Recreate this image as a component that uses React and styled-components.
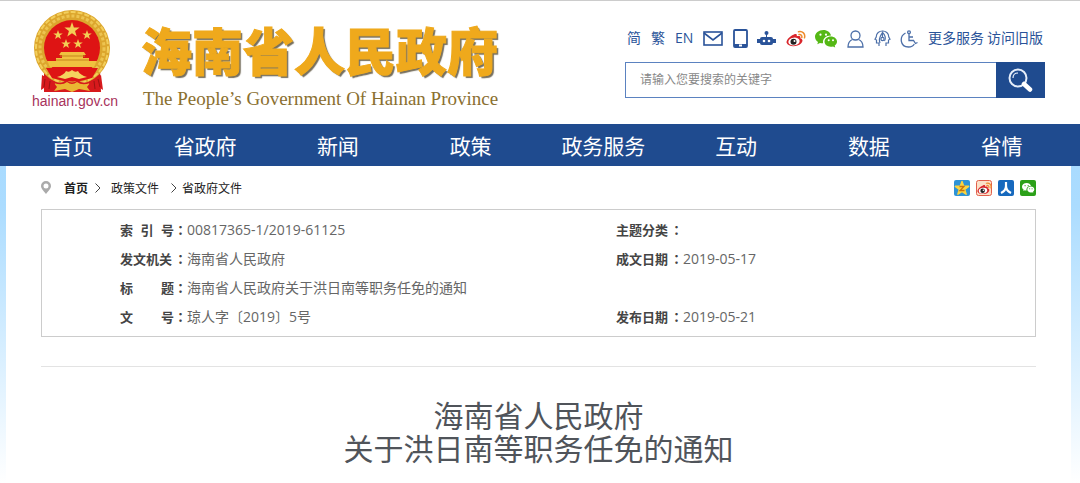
import React from "react";
import styled, { createGlobalStyle } from "styled-components";

const NAVY = "#1f4b8f";

const GlobalStyle = createGlobalStyle`
  * { box-sizing: border-box; }
  body {
    margin: 0;
    background: #fff;
    color: #333;
    font-family: "Open Sans", "Noto Sans CJK SC", sans-serif;
    font-size: 12px;
  }
  a { color: inherit; text-decoration: none; }
  svg { display: block; }
`;

const Page = styled.div`
  border-top: 1px solid #ccc;
`;

const Header = styled.header`
  display: flex;
  justify-content: space-between;
  align-items: flex-start;
  height: 123px;
  padding: 8px 35px 0 32px;
`;

const Brand = styled.a`
  display: flex;
  gap: 24px;
`;

const EmblemBlock = styled.span`
  display: flex;
  flex-direction: column;
  align-items: flex-start;
  width: 85px;
`;

const Domain = styled.span`
  color: #a8325c;
  font: 14px/16px "Liberation Sans", sans-serif;
`;

const BrandText = styled.span`
  display: flex;
  flex-direction: column;
  padding-top: 13px;
`;

const BrandName = styled.span`
  color: #efa91c;
  font-size: 51px;
  font-weight: 900;
  line-height: 58px;
  white-space: nowrap;
  -webkit-text-stroke: 1px #efa91c;
  text-shadow: 2px 2px 1px #77705f;
`;

const BrandEnglish = styled.span`
  color: #8a6f30;
  font: 19px/20px "Liberation Serif", serif;
  padding: 9px 0 0 2px;
  white-space: nowrap;
`;

const Tools = styled.div`
  display: flex;
  flex-direction: column;
  gap: 13px;
  width: 420px;
  padding-top: 19px;
`;

const ToolLinks = styled.nav`
  display: flex;
  align-items: center;
  justify-content: space-between;
  height: 21px;
  padding: 0 2px;
  color: #2a5399;
  font-size: 14px;
  line-height: 20px;
`;

const TextLinks = styled.span`
  display: flex;
  gap: ${(p) => p.$gap}px;
  padding-bottom: 2px;
`;

const Search = styled.form`
  display: flex;
  height: 36px;
`;

const SearchInput = styled.input`
  flex: 1;
  min-width: 0;
  padding: 0 14px 2px;
  border: 1px solid #5b82c0;
  border-right: 0;
  border-radius: 0;
  outline: 0;
  font: 12px "Open Sans", "Noto Sans CJK SC", sans-serif;
  &::placeholder { color: #888; }
`;

const SearchButton = styled.button`
  display: flex;
  align-items: center;
  justify-content: center;
  width: 49px;
  padding: 0;
  border: 0;
  background: ${NAVY};
`;

const MainNav = styled.nav`
  display: grid;
  grid-template-columns: repeat(8, 1fr);
  height: 42px;
  padding: 0 12px 0 6px;
  background: ${NAVY};
`;

const NavLink = styled.a`
  color: #fff;
  font-size: 21px;
  line-height: 44px;
  text-align: center;
`;

const Backdrop = styled.div`
  padding: 0 9px 0 6px;
  background: linear-gradient(#a9dbff 0, #abdcff 40px, #fff 317px);
`;

const Content = styled.main`
  min-height: 317px;
  padding: 0 35px;
  background: #fff;
`;

const TopLine = styled.div`
  display: flex;
  align-items: center;
  justify-content: space-between;
  height: 43px;
`;

const Crumbs = styled.nav`
  display: flex;
  align-items: center;
  color: #222;
`;

const Crumb = styled.a`
  margin-right: ${(p) => p.$after || 0}px;
  font-weight: ${(p) => (p.$strong ? 700 : 400)};
`;

const CrumbIcon = styled.span`
  margin-right: ${(p) => p.$after}px;
`;

const Share = styled.div`
  display: flex;
  gap: 6px;
`;

const InfoTable = styled.table`
  width: 100%;
  table-layout: fixed;
  border: 1px solid #ccc;
  border-collapse: separate;
  border-spacing: 0;
  padding: 5px 0;
  line-height: 28px;
`;

const LabelCell = styled.th`
  height: 29px;
  padding: 0;
  font-size: 13px;
  vertical-align: middle;
`;

const LabelLine = styled.span`
  display: flex;
  justify-content: flex-end;
  color: #444;
  font-weight: 700;
`;

const Label = styled.span`
  display: flex;
  justify-content: space-between;
  width: 54px;
  white-space: nowrap;
`;

const Colon = styled.span`
  font-family: "Noto Sans CJK TC", sans-serif;
`;

const Value = styled.td`
  height: 29px;
  padding: 0;
  color: #666;
  font-size: 14px;
  white-space: nowrap;
`;

const Divider = styled.hr`
  height: 1px;
  margin: 29px 0 31px;
  border: 0;
  background: #e3e3e3;
`;

const DocTitle = styled.h1`
  margin: 0;
  color: #50545a;
  font: 400 30px/33px "Noto Sans CJK SC", sans-serif;
  text-align: center;
`;

const star = (cx, cy, r) =>
  Array.from({ length: 10 }, (_, i) => {
    const a = (Math.PI * i) / 5 - Math.PI / 2;
    const q = i % 2 ? r * 0.4 : r;
    return `${cx + q * Math.cos(a)},${cy + q * Math.sin(a)}`;
  }).join(" ");

const Emblem = () => (
  <svg width="80" height="84" viewBox="0 0 80 84" aria-hidden="true">
    <path d="M12 60H68L69 83H12Z" fill="#d7191c" />
    <circle cx="40" cy="39" r="38" fill="#dca62d" />
    <circle cx="40" cy="39" r="36" fill="none" stroke="#f3cf5c" strokeWidth="2" strokeDasharray="5 2" />
    <circle cx="40" cy="39" r="32" fill="none" stroke="#edc450" strokeWidth="3" strokeDasharray="3 2" />
    <circle cx="40" cy="39" r="28" fill="#de1414" />
    <polygon points={star(40, 21, 8)} fill="#f3cf55" />
    <polygon points={star(26, 26, 5)} fill="#f3cf55" />
    <polygon points={star(55, 26, 5)} fill="#f3cf55" />
    <polygon points={star(34, 35, 5)} fill="#f3cf55" />
    <polygon points={star(46, 35, 5)} fill="#f3cf55" />
    <path d="M29 43H52L54 46H51V49H57V52H65L62 58H18L15 52H24V49H30V46H27Z" fill="#f0c13f" />
    <path d="M28 47H53M24 51H57" stroke="#c5851c" />
    <path d="M14 59H66L60 69Q40 76 20 69Z" fill="#de1414" />
    <path d="M25 68Q32 66 34 62Q37 64 40 61Q43 64 46 62Q48 66 55 68L47 70L40 68L33 70Z" fill="#f5d45e" />
    <path d="M20 72Q30 76 34 71Q40 76 46 71Q50 76 60 72V83H20Z" fill="#d7191c" />
    <path d="M22 74Q30 77 35 73Q40 77 45 73Q50 77 58 74L55 78L58 82L47 80L40 83L33 80L22 82L25 78Z" fill="#eab632" />
    <path d="M10 66Q17 70 23 73L22 82L18 80L15 83L12 79L9 81Z" fill="#d7191c" />
    <path d="M69 66Q63 70 57 73L58 82L62 80L65 83L68 79L71 81Z" fill="#d7191c" />
    <path d="M13 70L12 78M18 72L17 80M66 70L68 78M62 72L63 80" stroke="#9c1212" />
  </svg>
);

const MailIcon = () => (
  <svg width="20" height="15" viewBox="0 0 20 15" fill="none" stroke="#2a5399" strokeWidth="1.6">
    <rect x="1" y="1" width="18" height="13" />
    <path d="M1 2L10 9L19 2" />
  </svg>
);

const TabletIcon = () => (
  <svg width="15" height="19" viewBox="0 0 15 19">
    <rect x="1" y="1" width="13" height="17" rx="1" fill="none" stroke="#2a5399" strokeWidth="1.8" />
    <path d="M1 15H14V18H1Z" fill="#2a5399" />
    <rect x="6" y="15.500" width="3" height="2" fill="#fff" />
  </svg>
);

const RobotIcon = () => (
  <svg width="19" height="15" viewBox="0 0 19 15" fill="#2a5399">
    <circle cx="9.500" cy="2" r="2" />
    <path d="M9 2H10V6H9ZM0 8H3V12H0ZM16 8H19V12H16Z" />
    <rect x="3" y="6" width="13" height="8" rx="2" />
    <circle cx="7" cy="10" r="1.300" fill="#fff" />
    <circle cx="12" cy="10" r="1.300" fill="#fff" />
  </svg>
);

const WeiboShape = () => (
  <>
    <path d="M8 4.500C10 3.400 11.300 4.300 10.700 6.300C13 5.400 15 6 14.300 8.200C17 9 17.200 11.300 15 13.500C11 17.300 2 17 .6 12.800C0 10 4.500 5.500 8 4.500Z" fill="#d9252a" />
    <ellipse cx="8" cy="11.500" rx="5.700" ry="3.900" transform="rotate(-8 8 11.500)" fill="#fff" />
    <circle cx="7.500" cy="11.800" r="3" fill="#222" />
    <circle cx="8.500" cy="10.900" r="1" fill="#fff" />
    <path d="M13 4.600C15 4.200 16.300 5.600 15.800 7.600M12.500 1.700C16.500.7 19.600 3.800 18.500 7.800" fill="none" stroke="#ee8b2c" strokeWidth="1.500" strokeLinecap="round" />
  </>
);

const WeiboIcon = () => (
  <svg width="20" height="17" viewBox="0 0 20 17"><WeiboShape /></svg>
);

const WechatShape = ({ fill, eye }) => (
  <>
    <path d="M8.500 0C3.700 0 0 3 0 6.800C0 9 1.200 10.700 3 12L2.300 14.200L5 12.900C6 13.200 7 13.400 8.100 13.300C7.200 9 10.800 5.500 16 5.500C15.200 2.300 12.200 0 8.500 0Z" fill={fill} />
    <path d="M22 11.500C22 8.600 19.200 6.400 15.800 6.400C12.300 6.400 9.500 8.700 9.500 11.600C9.500 14.500 12.200 16.800 15.700 16.800C16.500 16.800 17.300 16.700 18 16.400L20.200 17.600L19.700 15.600C21.200 14.600 22 13.200 22 11.500Z" fill={fill} />
    <circle cx="5.500" cy="4.700" r="1.100" fill={eye} />
    <circle cx="11" cy="4.700" r="1.100" fill={eye} />
    <circle cx="13.700" cy="10.200" r="1" fill={eye} />
    <circle cx="18" cy="10.200" r="1" fill={eye} />
  </>
);

const WechatIcon = () => (
  <svg width="22" height="18" viewBox="0 0 22 18"><WechatShape fill="#55b815" eye="#fff" /></svg>
);

const PersonIcon = () => (
  <svg width="17" height="18" viewBox="0 0 17 18" fill="none" stroke="#4c6fa8" strokeWidth="1.300">
    <circle cx="8.500" cy="5.500" r="4.500" />
    <path d="M5.500 9.500C2.500 10.700 1 13 1 17H16C16 13 14.500 10.700 11.500 9.500" />
  </svg>
);

const HeadsIcon = () => (
  <svg width="17" height="17" viewBox="0 0 17 17" fill="none" stroke="#4c6fa8" strokeWidth="1.200">
    <path d="M5 16V13H2.500V10L1 9.200L2.200 7C2.200-1 14.800-1 14.800 7L16 9.200L14.500 10V13H12V16" />
    <path d="M6 13C4 8 6.500 6 8.500 2.500V7.500M8.500 2.500C11.500 5 12 9 10.500 11" />
    <circle cx="8.500" cy="9" r="1.600" />
  </svg>
);

const WheelchairIcon = () => (
  <svg width="18" height="18" viewBox="0 0 18 18" fill="none" stroke="#4c6fa8" strokeWidth="1.300">
    <path d="M5.500 3C-1 6.500 0 17 8.500 17C11.200 17 13.300 15.800 14.300 14" />
    <circle cx="9" cy="2.200" r="1.400" />
    <path d="M9 4V10.500H13.500L15.500 13.500L17.500 12.500M9 7H13" />
  </svg>
);

const SearchIcon = () => (
  <svg width="25" height="25" viewBox="0 0 25 25" fill="none" stroke="#e6eefa">
    <circle cx="10" cy="10" r="8.500" strokeWidth="2" />
    <path d="M5 10C5 7 7 5 10 5" strokeWidth="1.200" />
    <path d="M16 16L22 21.500" strokeWidth="4.500" strokeLinecap="round" stroke="#fff" />
  </svg>
);

const PinIcon = () => (
  <svg width="10" height="13" viewBox="0 0 10 13">
    <path fillRule="evenodd" d="M5 0A5 5 0 0 0 0 5C0 8 3 10 5 13C7 10 10 8 10 5A5 5 0 0 0 5 0ZM5 2.500A2.500 2.500 0 1 1 5 7.500A2.500 2.500 0 0 1 5 2.500Z" fill="#aaa" />
  </svg>
);

const Arrow = () => (
  <svg width="6" height="10" viewBox="0 0 6 10" fill="none" stroke="#444"><path d="M.5 .5L5 5L.5 9.500" /></svg>
);

const QzoneShare = () => (
  <svg width="16" height="16" viewBox="0 0 16 16">
    <rect width="16" height="16" rx="2" fill="#2e93d6" />
    <polygon points={star(8, 8.5, 7)} fill="#fcd53f" stroke="#fcd53f" strokeWidth="1.500" strokeLinejoin="round" />
    <path d="M5.500 6.500H10L6 10.500H10.500" fill="none" stroke="#c9730b" strokeWidth="1.300" />
  </svg>
);

const WeiboShare = () => (
  <svg width="16" height="16" viewBox="0 0 16 16">
    <rect x=".5" y=".5" width="15" height="15" rx="2" fill="#fbe0c8" stroke="#e2604c" />
    <g transform="translate(1 2) scale(.75)"><WeiboShape /></g>
  </svg>
);

const RenrenShare = () => (
  <svg width="16" height="16" viewBox="0 0 16 16">
    <rect width="16" height="16" rx="2" fill="#1769bd" />
    <path d="M8 2V6C8 9 6 11.500 3 13M8 6C8 9 10 11.500 13 13" fill="none" stroke="#fff" strokeWidth="2.200" />
  </svg>
);

const WechatShare = () => (
  <svg width="16" height="16" viewBox="0 0 16 16">
    <rect width="16" height="16" rx="2" fill="#2ba018" />
    <g transform="translate(2 3) scale(.56)"><WechatShape fill="#fff" eye="#2ba018" /></g>
  </svg>
);

const toolIcons = [
  ["邮箱", MailIcon],
  ["移动版", TabletIcon],
  ["智能问答", RobotIcon],
  ["微博", WeiboIcon],
  ["微信", WechatIcon],
  ["个人中心", PersonIcon],
  ["关怀版", HeadsIcon],
  ["无障碍", WheelchairIcon],
];

const shareIcons = [
  ["QQ空间", QzoneShare],
  ["新浪微博", WeiboShare],
  ["人人网", RenrenShare],
  ["微信", WechatShare],
];

const navItems = ["首页", "省政府", "新闻", "政策", "政务服务", "互动", "数据", "省情"];

const rows = [
  [["索", "引", "号"], "00817365-1/2019-61125", ["主题分类"], ""],
  [["发文机关"], "海南省人民政府", ["成文日期"], "2019-05-17"],
  [["标", "题"], "海南省人民政府关于洪日南等职务任免的通知"],
  [["文", "号"], "琼人字〔2019〕5号", ["发布日期"], "2019-05-21"],
];

const FieldLabel = ({ parts }) => (
  <LabelCell scope="row">
    <LabelLine>
      <Label>{parts.map((t) => <span key={t}>{t}</span>)}</Label>
      <Colon lang="zh-TW">：</Colon>
    </LabelLine>
  </LabelCell>
);

export default function App() {
  return (
    <Page>
      <GlobalStyle />
      <Header>
        <Brand href="#">
          <EmblemBlock>
            <Emblem />
            <Domain>hainan.gov.cn</Domain>
          </EmblemBlock>
          <BrandText>
            <BrandName>海南省人民政府</BrandName>
            <BrandEnglish>The People’s Government Of Hainan Province</BrandEnglish>
          </BrandText>
        </Brand>
        <Tools>
          <ToolLinks>
            <TextLinks $gap={10}>
              <a href="#">简</a>
              <a href="#">繁</a>
              <a href="#">EN</a>
            </TextLinks>
            {toolIcons.map(([name, Icon]) => (
              <a key={name} href="#" aria-label={name}><Icon /></a>
            ))}
            <TextLinks $gap={3}>
              <a href="#">更多服务</a>
              <a href="#">访问旧版</a>
            </TextLinks>
          </ToolLinks>
          <Search>
            <SearchInput type="text" aria-label="搜索" placeholder="请输入您要搜索的关键字" />
            <SearchButton type="submit" aria-label="搜索"><SearchIcon /></SearchButton>
          </Search>
        </Tools>
      </Header>
      <MainNav>
        {navItems.map((t) => <NavLink key={t} href="#">{t}</NavLink>)}
      </MainNav>
      <Backdrop>
        <Content>
          <TopLine>
            <Crumbs>
              <CrumbIcon $after={13}><PinIcon /></CrumbIcon>
              <Crumb href="#" $strong $after={7}>首页</Crumb>
              <CrumbIcon $after={10}><Arrow /></CrumbIcon>
              <Crumb href="#" $after={12}>政策文件</Crumb>
              <CrumbIcon $after={5}><Arrow /></CrumbIcon>
              <Crumb href="#">省政府文件</Crumb>
            </Crumbs>
            <Share>
              {shareIcons.map(([name, Icon]) => (
                <a key={name} href="#" aria-label={name}><Icon /></a>
              ))}
            </Share>
          </TopLine>
          <InfoTable>
            <colgroup>
              <col width="145" />
              <col />
              <col width="68" />
              <col width="352" />
            </colgroup>
            <tbody>
              {rows.map(([label, value, label2, value2]) => (
                <tr key={label.join("")}>
                  <FieldLabel parts={label} />
                  <Value colSpan={label2 ? 1 : 3}>{value}</Value>
                  {label2 && <FieldLabel parts={label2} />}
                  {label2 && <Value>{value2}</Value>}
                </tr>
              ))}
            </tbody>
          </InfoTable>
          <Divider />
          <DocTitle>海南省人民政府<br />关于洪日南等职务任免的通知</DocTitle>
        </Content>
      </Backdrop>
    </Page>
  );
}
